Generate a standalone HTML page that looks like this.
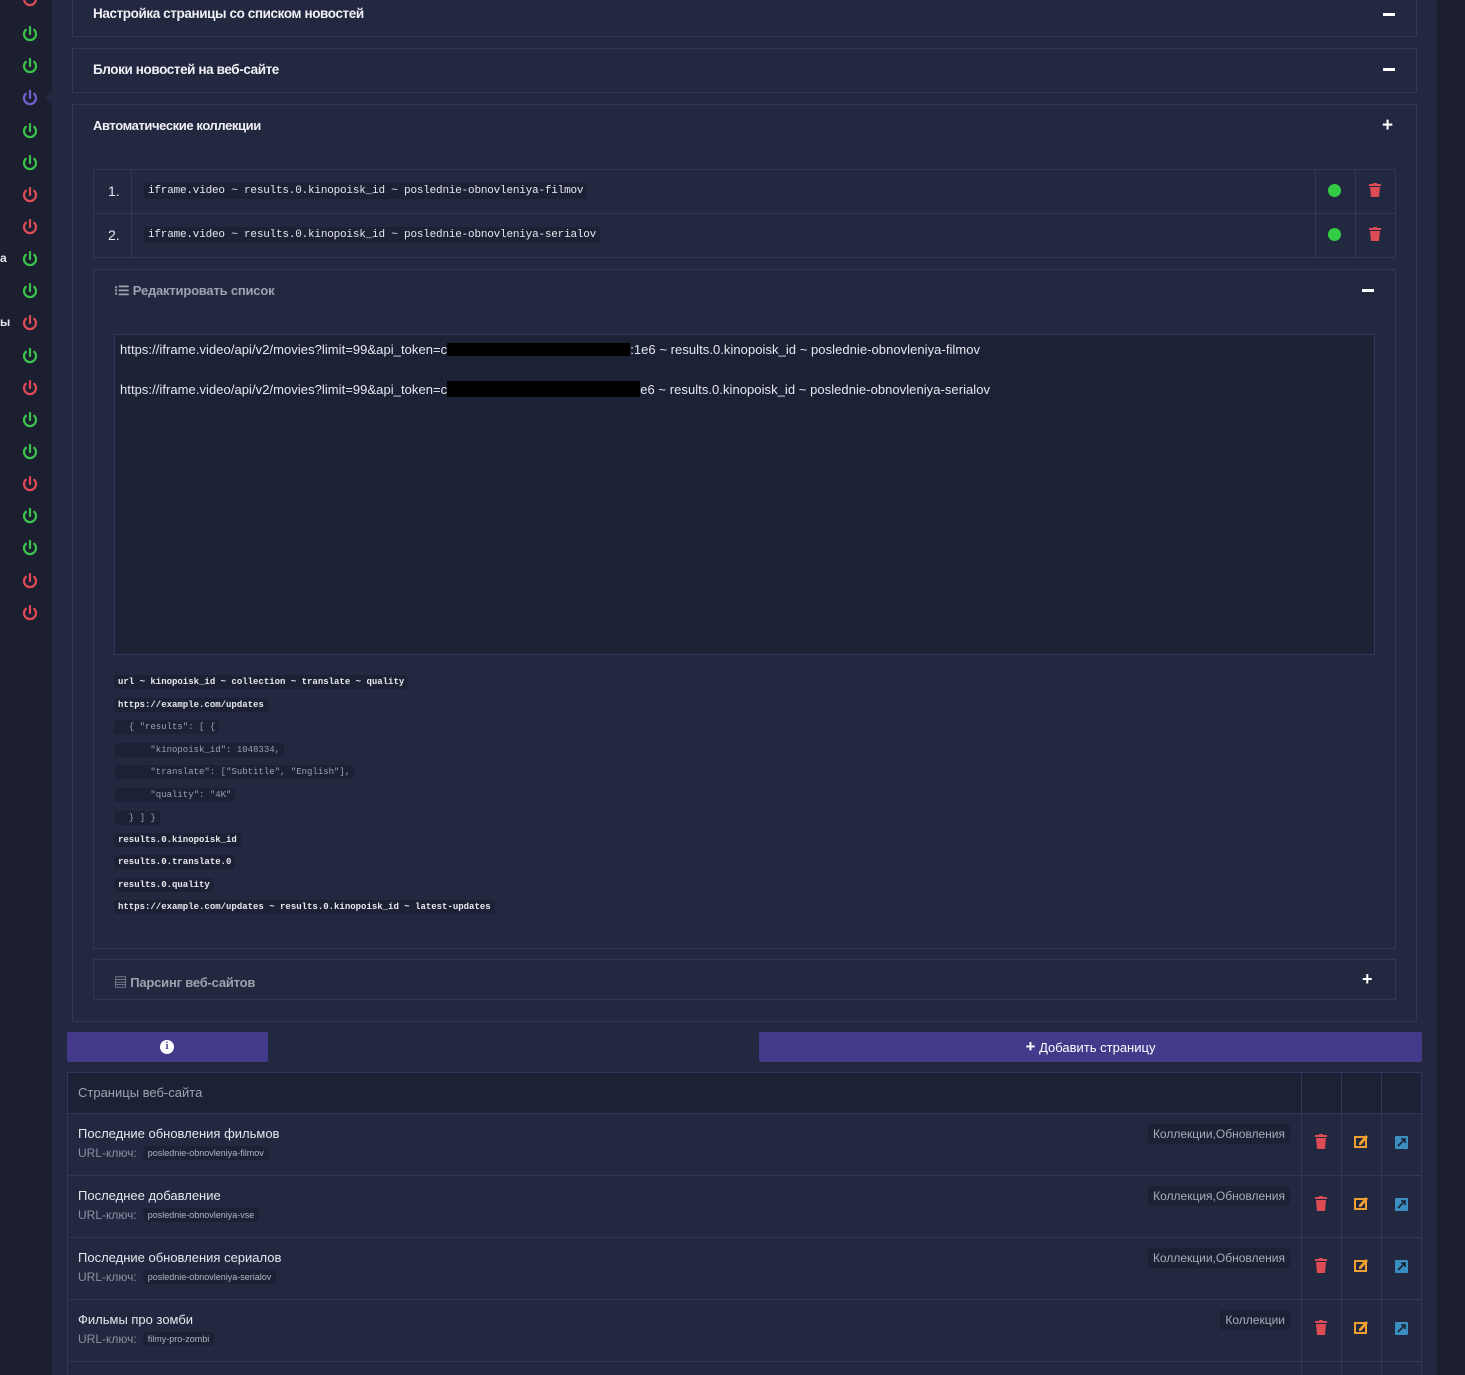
<!DOCTYPE html>
<html><head><meta charset="utf-8"><style>
*{box-sizing:border-box;margin:0;padding:0}
html,body{width:1465px;height:1375px;overflow:hidden}
body{background:#222840;font-family:"Liberation Sans","Noto Sans CJK SC",sans-serif;color:#e6e8ef;position:relative}
.a{position:absolute}
.side{left:0;top:0;width:52px;height:1375px;background:#1b1f30}
.rs{left:1437px;top:0;width:28px;height:1375px;background:#1b1f30}
.panel{position:absolute;border:1px solid #30375a;background:#222840}
.h{font-weight:bold;font-size:13.5px;letter-spacing:-0.4px;color:#f0f0f5;position:absolute}
.mono{font-family:"Liberation Mono",monospace}
.code{display:inline-block;background:#1c2136;border-radius:3px;padding:2px 4px;font-family:"Liberation Mono",monospace;font-size:9px;font-weight:bold;color:#e8e8ee;position:absolute;left:114px}
.code.d{color:#9aa0b0;font-weight:normal}
.tag{position:absolute;background:#1c2136;border-radius:3px;padding:3px 5px;font-size:12px;color:#a8acb8}
.key{display:inline-block;background:#1c2136;border-radius:3px;padding:2px 5px;font-size:9px;color:#b0b4c0;margin-left:6px;vertical-align:1px}
</style></head><body>
<div class="a side"></div>
<div class="a rs"></div>
<svg class="a" style="left:0;top:0" width="52" height="630">
<defs><g id="p"><path d="M-4.2 -4.2A6 6 0 1 0 4.2 -4.2" fill="none" stroke-width="2.2" stroke-linecap="round"/><line x1="0" y1="-7" x2="0" y2="0" stroke-width="2.2" stroke-linecap="round"/></g></defs>
<g stroke="#dd4b55"><use href="#p" x="30" y="-1"/></g>
<g stroke="#3cc24a"><use href="#p" x="30" y="34"/><use href="#p" x="30" y="66"/></g>
<g stroke="#6e62c8"><use href="#p" x="30" y="98"/></g>
<g stroke="#3cc24a"><use href="#p" x="30" y="131"/><use href="#p" x="30" y="163"/></g>
<g stroke="#dd4b55"><use href="#p" x="30" y="195"/><use href="#p" x="30" y="227"/></g>
<g stroke="#3cc24a"><use href="#p" x="30" y="259"/><use href="#p" x="30" y="291"/></g>
<g stroke="#dd4b55"><use href="#p" x="30" y="323"/></g>
<g stroke="#3cc24a"><use href="#p" x="30" y="356"/></g>
<g stroke="#dd4b55"><use href="#p" x="30" y="388"/></g>
<g stroke="#3cc24a"><use href="#p" x="30" y="420"/><use href="#p" x="30" y="452"/></g>
<g stroke="#dd4b55"><use href="#p" x="30" y="484"/></g>
<g stroke="#3cc24a"><use href="#p" x="30" y="516"/><use href="#p" x="30" y="548"/></g>
<g stroke="#dd4b55"><use href="#p" x="30" y="581"/><use href="#p" x="30" y="613"/></g>
<path d="M52 90L45 97L52 104Z" fill="#222840"/>
</svg>
<div class="a" style="left:0;top:251px;font-size:12px;font-weight:bold">a</div>
<div class="a" style="left:0;top:315px;font-size:12px;font-weight:bold">ы</div>

<div class="panel" style="left:72px;top:-10px;width:1345px;height:47px"></div>
<div class="h" style="left:93px;top:6px">Настройка страницы со списком новостей</div>
<div class="a" style="left:1383px;top:13px;width:12px;height:3px;background:#fff"></div>
<div class="panel" style="left:72px;top:48px;width:1345px;height:45px"></div>
<div class="h" style="left:93px;top:62px">Блоки новостей на веб-сайте</div>
<div class="a" style="left:1383px;top:68px;width:12px;height:3px;background:#fff"></div>
<div class="panel" style="left:72px;top:104px;width:1345px;height:918px"></div>
<div class="h" style="left:93px;top:118px;font-size:13px">Автоматические коллекции</div>
<div class="a" style="left:1382px;top:115px;font-size:19px;font-weight:bold;color:#fff">+</div>

<div class="a" style="left:93px;top:169px;width:1303px;height:89px;border:1px solid #30375a"></div>
<div class="a" style="left:93px;top:213px;width:1303px;height:1px;background:#30375a"></div>
<div class="a" style="left:131px;top:169px;width:1px;height:89px;background:#30375a"></div>
<div class="a" style="left:1315px;top:169px;width:1px;height:89px;background:#30375a"></div>
<div class="a" style="left:1355px;top:169px;width:1px;height:89px;background:#30375a"></div>
<div class="a" style="left:108px;top:183px;font-size:14px">1.</div>
<div class="a" style="left:108px;top:227px;font-size:14px">2.</div>
<div class="a mono" style="left:144px;top:183px;font-size:11px;letter-spacing:-0.2px;background:#1c2136;padding:2px 4px;border-radius:3px">iframe.video ~ results.0.kinopoisk_id ~ poslednie-obnovleniya-filmov</div>
<div class="a mono" style="left:144px;top:227px;font-size:11px;letter-spacing:-0.2px;background:#1c2136;padding:2px 4px;border-radius:3px">iframe.video ~ results.0.kinopoisk_id ~ poslednie-obnovleniya-serialov</div>
<div class="a" style="left:1328px;top:184px;width:13px;height:13px;border-radius:50%;background:#33cc44"></div>
<div class="a" style="left:1328px;top:228px;width:13px;height:13px;border-radius:50%;background:#33cc44"></div>
<svg class="a" style="left:1369px;top:183px" width="12" height="60"><g fill="#dd4b55"><rect x="0" y="1" width="12" height="2"/><rect x="4" y="0" width="4" height="2"/><path d="M1 4h10l-1 10H2z"/><rect x="0" y="45" width="12" height="2"/><rect x="4" y="44" width="4" height="2"/><path d="M1 48h10l-1 10H2z"/></g></svg>

<div class="a" style="left:93px;top:269px;width:1303px;height:680px;border:1px solid #30375a"></div>
<div class="a" style="left:114px;top:283px;font-size:13px;font-weight:bold;color:#9ea2b0;letter-spacing:-0.2px">⁝☰ Редактировать список</div>
<div class="a" style="left:1362px;top:289px;width:12px;height:3px;background:#fff"></div>
<div class="a" style="left:114px;top:334px;width:1261px;height:321px;border:1px solid #30375a;background:#1c2136"></div>
<div class="a" style="left:120px;top:342px;font-size:13px;letter-spacing:0.05px">https://iframe.video/api/v2/movies?limit=99&amp;api_token=c<span style="display:inline-block;width:183px;height:13px;background:#000;vertical-align:-2px"></span>:1e6 ~ results.0.kinopoisk_id ~ poslednie-obnovleniya-filmov</div>
<div class="a" style="left:120px;top:381px;font-size:13px;letter-spacing:0.05px">https://iframe.video/api/v2/movies?limit=99&amp;api_token=c<span style="display:inline-block;width:193px;height:16px;background:#000;vertical-align:-3px"></span>e6 ~ results.0.kinopoisk_id ~ poslednie-obnovleniya-serialov</div>

<div class="code" style="top:675px">url ~ kinopoisk_id ~ collection ~ translate ~ quality</div>
<div class="code" style="top:698px">https://example.com/updates</div>
<div class="code d" style="top:720px">&nbsp;&nbsp;{ "results": [ {</div>
<div class="code d" style="top:743px">&nbsp;&nbsp;&nbsp;&nbsp;&nbsp;&nbsp;"kinopoisk_id": 1048334,</div>
<div class="code d" style="top:765px">&nbsp;&nbsp;&nbsp;&nbsp;&nbsp;&nbsp;"translate": ["Subtitle", "English"],</div>
<div class="code d" style="top:788px">&nbsp;&nbsp;&nbsp;&nbsp;&nbsp;&nbsp;"quality": "4K"</div>
<div class="code d" style="top:811px">&nbsp;&nbsp;} ] }</div>
<div class="code" style="top:833px">results.0.kinopoisk_id</div>
<div class="code" style="top:855px">results.0.translate.0</div>
<div class="code" style="top:878px">results.0.quality</div>
<div class="code" style="top:900px">https://example.com/updates ~ results.0.kinopoisk_id ~ latest-updates</div>

<div class="a" style="left:93px;top:959px;width:1303px;height:41px;border:1px solid #30375a"></div>
<div class="a" style="left:114px;top:972px;font-size:13px;font-weight:bold;color:#9ea2b0;letter-spacing:-0.2px">▤ Парсинг веб-сайтов</div>
<div class="a" style="left:1362px;top:969px;font-size:18px;font-weight:bold;color:#fff">+</div>

<div class="a" style="left:67px;top:1032px;width:201px;height:30px;background:#433a8c;border-radius:2px"></div>
<div class="a" style="left:160px;top:1040px;width:14px;height:14px;border-radius:50%;background:#fff;color:#433a8c;font-size:10px;font-weight:bold;text-align:center;line-height:14px;font-family:'Liberation Serif',serif">i</div>
<div class="a" style="left:759px;top:1032px;width:663px;height:30px;background:#433a8c;border-radius:2px;text-align:center;line-height:30px;font-size:13px;color:#fff"><b style="font-size:17px">+</b> Добавить страницу</div>

<div class="a" style="left:67px;top:1072px;width:1355px;height:310px;border:1px solid #30375a"></div>
<div class="a" style="left:68px;top:1073px;width:1353px;height:40px;background:#1c2136"></div>
<div class="a" style="left:78px;top:1085px;font-size:13px;color:#9ea2b0">Страницы веб-сайта</div>
<div class="a" style="left:1301px;top:1072px;width:1px;height:310px;background:#30375a"></div>
<div class="a" style="left:1341px;top:1072px;width:1px;height:310px;background:#30375a"></div>
<div class="a" style="left:1381px;top:1072px;width:1px;height:310px;background:#30375a"></div>
<div class="a" style="left:67px;top:1113px;width:1355px;height:1px;background:#30375a"></div>
<div class="a" style="left:67px;top:1175px;width:1355px;height:1px;background:#30375a"></div>
<div class="a" style="left:67px;top:1237px;width:1355px;height:1px;background:#30375a"></div>
<div class="a" style="left:67px;top:1299px;width:1355px;height:1px;background:#30375a"></div>
<div class="a" style="left:67px;top:1361px;width:1355px;height:1px;background:#30375a"></div>

<div class="a" style="left:78px;top:1126px;font-size:13px">Последние обновления фильмов</div>
<div class="a" style="left:78px;top:1146px;font-size:12px;color:#8c90a0">URL-ключ:<span class="key">poslednie-obnovleniya-filmov</span></div>
<div class="tag" style="right:175px;top:1124px">Коллекции,Обновления</div>
<div class="a" style="left:78px;top:1188px;font-size:13px">Последнее добавление</div>
<div class="a" style="left:78px;top:1208px;font-size:12px;color:#8c90a0">URL-ключ:<span class="key">poslednie-obnovleniya-vse</span></div>
<div class="tag" style="right:175px;top:1186px">Коллекция,Обновления</div>
<div class="a" style="left:78px;top:1250px;font-size:13px">Последние обновления сериалов</div>
<div class="a" style="left:78px;top:1270px;font-size:12px;color:#8c90a0">URL-ключ:<span class="key">poslednie-obnovleniya-serialov</span></div>
<div class="tag" style="right:175px;top:1248px">Коллекции,Обновления</div>
<div class="a" style="left:78px;top:1312px;font-size:13px">Фильмы про зомби</div>
<div class="a" style="left:78px;top:1332px;font-size:12px;color:#8c90a0">URL-ключ:<span class="key">filmy-pro-zombi</span></div>
<div class="tag" style="right:175px;top:1310px">Коллекции</div>

<svg class="a" style="left:1300px;top:1130px" width="120" height="210">
<defs>
<g id="t" fill="#dd4b55"><rect x="15" y="5" width="12" height="2"/><rect x="19" y="4" width="4" height="2"/><path d="M16 8h10l-1 11H17z"/></g>
<g id="e"><rect x="55" y="7" width="11" height="10" fill="none" stroke="#f0a030" stroke-width="2"/><path d="M59 13l7-8 2 2-7 8h-2z" fill="#f0a030"/></g>
<g id="l"><rect x="95" y="6" width="13" height="13" rx="1" fill="#3a8fc0"/><path d="M98 16l7-7M101 9h4v4" stroke="#1a2030" stroke-width="1.6" fill="none"/></g>
</defs>
<use href="#t"/><use href="#e"/><use href="#l"/>
<g transform="translate(0,62)"><use href="#t"/><use href="#e"/><use href="#l"/></g>
<g transform="translate(0,124)"><use href="#t"/><use href="#e"/><use href="#l"/></g>
<g transform="translate(0,186)"><use href="#t"/><use href="#e"/><use href="#l"/></g>
</svg>
</body></html>
